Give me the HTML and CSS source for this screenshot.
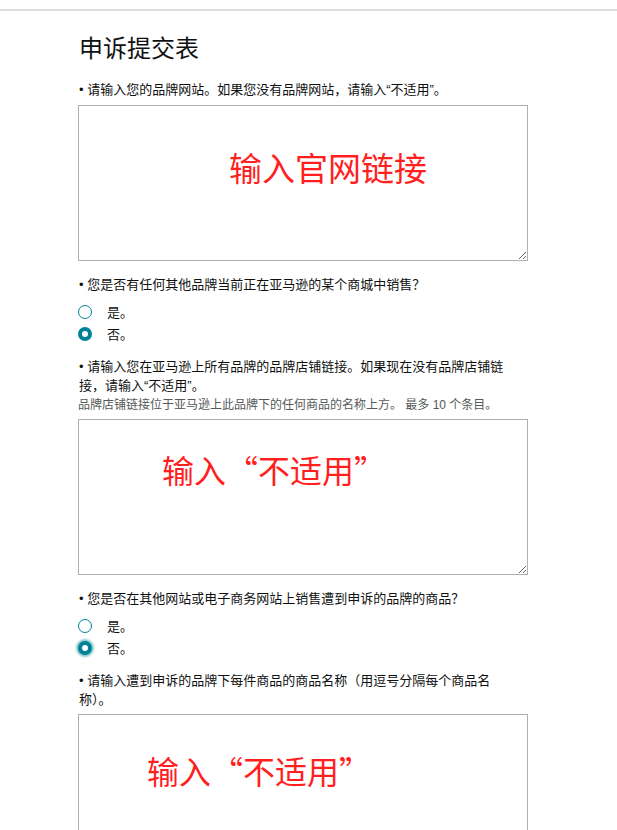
FILE: index.html
```html
<!DOCTYPE html>
<html lang="zh-CN">
<head>
    <meta charset="UTF-8">
    <meta name="viewport" content="width=device-width, initial-scale=1.0">
    <title>申诉提交表</title>
    <link rel="stylesheet" href="styles.css">
</head>
<body>
    <div class="topbar"></div>

    <div class="form-container">
        <h1>申诉提交表</h1>
        <form id="appealForm">
            <!-- 品牌网站 -->
            <div class="field">
                <label class="field-label" for="website">• 请输入您的品牌网站。如果您没有品牌网站，请输入“不适用”。</label>
                <div class="textarea-wrap">
                    <textarea id="website" name="website"></textarea>
                    <span class="note note-1">输入官网链接</span>
                </div>
            </div>

            <!-- 其他品牌 -->
            <div class="field field-radio">
                <div class="field-label">• 您是否有任何其他品牌当前正在亚马逊的某个商城中销售？</div>
                <div class="radio-group">
                    <label class="option"><input type="radio" name="q2" value="yes"> 是。</label>
                    <label class="option"><input type="radio" name="q2" value="no" checked> 否。</label>
                </div>
            </div>

            <!-- 品牌店铺链接 -->
            <div class="field">
                <label class="field-label" for="storeLinks">• 请输入您在亚马逊上所有品牌的品牌店铺链接。如果现在没有品牌店铺链接，请输入“不适用”。</label>
                <div class="hint">品牌店铺链接位于亚马逊上此品牌下的任何商品的名称上方。 最多 10 个条目。</div>
                <div class="textarea-wrap">
                    <textarea id="storeLinks" name="storeLinks"></textarea>
                    <span class="note note-2">输入“不适用”</span>
                </div>
            </div>

            <!-- 其他网站 -->
            <div class="field field-radio">
                <div class="field-label">• 您是否在其他网站或电子商务网站上销售遭到申诉的品牌的商品？</div>
                <div class="radio-group">
                    <label class="option"><input type="radio" name="q4" value="yes"> 是。</label>
                    <label class="option"><input type="radio" name="q4" value="no" class="focused" checked> 否。</label>
                </div>
            </div>

            <!-- 商品名称 -->
            <div class="field field-last">
                <label class="field-label" for="products">• 请输入遭到申诉的品牌下每件商品的商品名称（用逗号分隔每个商品名称）。</label>
                <div class="textarea-wrap">
                    <textarea id="products" name="products"></textarea>
                    <span class="note note-3">输入“不适用”</span>
                </div>
            </div>
        </form>
    </div>
</body>
</html>
```

FILE: styles.css
```css
* { margin: 0; padding: 0; box-sizing: border-box; }
html, body { overflow: hidden; }
body { font-family: "Liberation Sans", "Noto Sans CJK SC", sans-serif; font-size: 13px; line-height: 19px; color: #0f1111; background: #fff; }

.topbar { height: 11px; border-bottom: 2px solid #dddddd; }

.form-container { padding-left: 78px; width: 528px; }
h1 { font-family: "Noto Sans CJK SC", sans-serif; font-size: 24px; line-height: 30px; font-weight: normal; margin-top: 21px; margin-bottom: 18px; padding-left: 1px; color: #0f1111; }

.field { margin-bottom: 14px; }
.field-radio { margin-bottom: 12px; }
.field-label { display: block; width: 440px; padding-left: 1px; margin-bottom: 6px; }
.field-radio .field-label { margin-bottom: 7px; }
.field-last .field-label { margin-bottom: 5px; }

.hint { color: #565959; font-size: 12px; line-height: 17px; margin-top: -4px; margin-bottom: 5px; }

.textarea-wrap { position: relative; width: 450px; }
textarea { display: block; width: 450px; height: 156px; border: 1px solid #a9b1b3; border-radius: 0; background: #fff; font-family: inherit; font-size: 13px; padding: 4px 8px; resize: both; outline: none; }

/* 红色批注 */
.note { position: absolute; font-family: "Noto Sans CJK SC", sans-serif; color: #ff1f1f; line-height: 1; white-space: nowrap; pointer-events: none; }
.note-1 { left: 151px; top: 46px; font-size: 33px; }
.note-2 { left: 84px; top: 34px; font-size: 32px; }
.note-3 { left: 69px; top: 40px; font-size: 32px; }

.radio-group { display: flex; flex-direction: column; }
.option { display: flex; align-items: center; height: 22px; cursor: pointer; }
.option input { appearance: none; -webkit-appearance: none; width: 14px; height: 14px; margin-right: 15px; border: 1.5px solid #008296; border-radius: 50%; background: #fff; flex-shrink: 0; }
.option input:checked { border: 4.5px solid #008296; }
.option input.focused { box-shadow: 0 0 2px 2px rgba(0, 130, 150, 0.45); }
```
